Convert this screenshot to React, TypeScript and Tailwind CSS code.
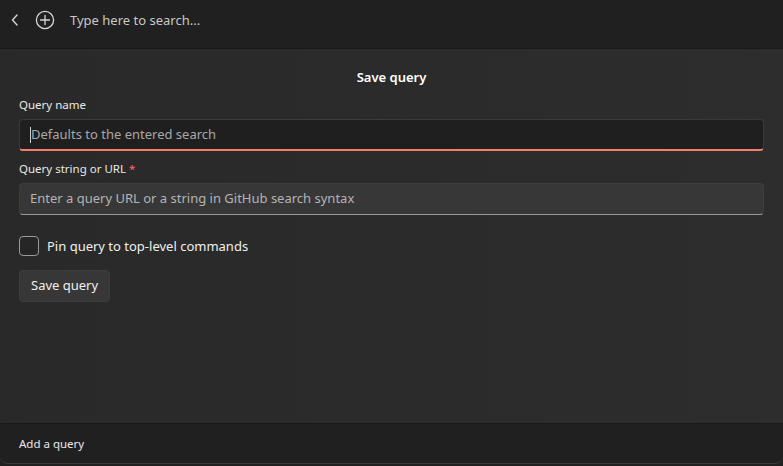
import React from 'react';

export default function App() {
  return (
    <div className="w-[783px] h-[466px] flex flex-col bg-[#202020] text-white overflow-hidden" style={{ fontFamily: '"Noto Sans", "Open Sans", sans-serif' }}>
      <header className="h-[49px] shrink-0 flex items-center pb-[8px] bg-[#202020] border-b border-[#1a1a1a]">
        <svg width="10" height="14" viewBox="0 0 10 14" className="ml-[10px]">
          <path d="M7 2 L2.5 7 L7 12" fill="none" stroke="#d6d6d6" strokeWidth="1.4" strokeLinecap="round" strokeLinejoin="round" />
        </svg>
        <svg width="20" height="20" viewBox="0 0 20 20" className="ml-[15px]">
          <circle cx="10" cy="10" r="8.6" fill="none" stroke="#d6d6d6" strokeWidth="1.3" />
          <path d="M10 5.5 V14.5 M5.5 10 H14.5" stroke="#d6d6d6" strokeWidth="1.3" strokeLinecap="round" />
        </svg>
        <span className="ml-[15px] text-[13px] leading-[20px] text-[#c8c8c8]">Type here to search...</span>
      </header>

      <main className="flex-1 flex flex-col px-[19px] bg-gradient-to-r from-[#292929] to-[#2d2d2d]">
        <h1 className="text-center text-[13px] leading-[20px] font-semibold mt-[18px] mb-[10px]">Save query</h1>

        <label className="text-[11.5px] leading-[16px] text-[#e8e8e8] mb-[6px]">Query name</label>
        <div className="h-[32px] flex items-center rounded-[4px] bg-[#1f1f1f] border border-[#3a3a3a] border-b-2 border-b-[#f0806a] px-[10px]">
          <span className="w-px h-[16px] bg-[#cfcfcf]" />
          <span className="text-[13px] text-[#a8a8a8]">Defaults to the entered search</span>
        </div>

        <label className="text-[11.5px] leading-[16px] text-[#e8e8e8] mt-[10px] mb-[6px]">
          Query string or URL <span className="text-[#ff6b6b]">*</span>
        </label>
        <div className="h-[32px] flex items-center rounded-[4px] bg-[#373737] border border-[#3d3d3d] border-b-[#9a9a9a] px-[10px]">
          <span className="text-[13px] text-[#b4b4b4]">Enter a query URL or a string in GitHub search syntax</span>
        </div>

        <div className="flex items-center mt-[21px] gap-[8px]">
          <span className="w-[20px] h-[20px] rounded-[4px] border border-[#9a9a9a] bg-[#262626]" />
          <span className="text-[13px] leading-[20px] text-[#f0f0f0]">Pin query to top-level commands</span>
        </div>

        <div className="mt-[14px]">
          <button className="h-[32px] px-[11px] rounded-[4px] bg-[#373737] border border-[#3d3d3d] text-[13px] text-[#f0f0f0]">
            Save query
          </button>
        </div>
      </main>

      <footer className="h-[41px] shrink-0 flex items-center px-[19px] bg-[#202020] border-t border-[#1a1a1a] border-b border-b-[#3a3a3a] rounded-b-[8px]">
        <span className="text-[11.5px] text-[#e8e8e8]">Add a query</span>
      </footer>
      <div className="h-[2px]" />
    </div>
  );
}
